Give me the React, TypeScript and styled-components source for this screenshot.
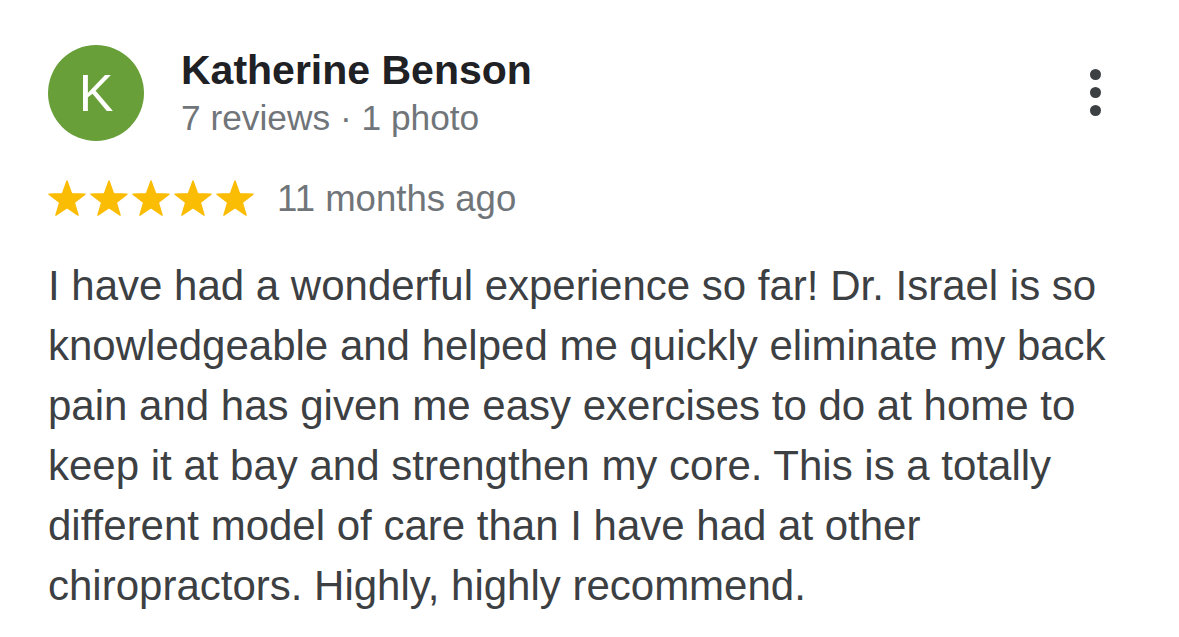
import styled, { createGlobalStyle } from "styled-components";

const GlobalStyle = createGlobalStyle`
	html, body {
		margin: 0;
		padding: 0;
		background: #ffffff;
	}
	body {
		font-family: "Liberation Sans", Arial, sans-serif;
	}
`;

// five point star, outer radius ~19, drawn in a 36x34 box
const Star = () => (
	<StarIcon viewBox="-1 -1 38 36">
		<path
			fill="#fbbc04"
			stroke="#fbbc04"
			strokeWidth="1.4"
			strokeLinejoin="round"
			d="M18 0 L22.6 12.8 L36 13.1 L25.3 21.4 L29.1 34.2 L18 26.6 L6.9 34.2 L10.7 21.4 L0 13.1 L13.4 12.8 Z"
		/>
	</StarIcon>
);

export default function App() {
	return (
		<>
			<GlobalStyle />
			<Card>
				<Header>
					<Avatar>K</Avatar>
					<Author>
						<Name>Katherine Benson</Name>
						<Meta>7 reviews · 1 photo</Meta>
					</Author>
					<MoreButton aria-label="More">
						<Dot />
						<Dot />
						<Dot />
					</MoreButton>
				</Header>
				<RatingRow>
					<Stars>
						{[0, 1, 2, 3, 4].map((i) => (
							<Star key={i} />
						))}
					</Stars>
					<Time>11 months ago</Time>
				</RatingRow>
				<Body>
					I have had a wonderful experience so far! Dr. Israel is so
					knowledgeable and helped me quickly eliminate my back pain and has
					given me easy exercises to do at home to keep it at bay and
					strengthen my core. This is a totally different model of care than I
					have had at other chiropractors. Highly, highly recommend.
				</Body>
			</Card>
		</>
	);
}

const Card = styled.div`
	width: 1179px;
	height: 637px;
	box-sizing: border-box;
	padding: 45px 41px 0 48px;
	background: #ffffff;
	overflow: hidden;
`;

const Header = styled.div`
	display: flex;
	align-items: flex-start;
`;

const Avatar = styled.div`
	width: 96px;
	height: 96px;
	border-radius: 50%;
	background: #689f38;
	color: #ffffff;
	font-size: 52px;
	line-height: 1;
	display: flex;
	align-items: center;
	justify-content: center;
	flex-shrink: 0;
`;

const Author = styled.div`
	margin-left: 37px;
	padding-top: 1px;
	flex: 1;
`;

const Name = styled.div`
	font-size: 41px;
	font-weight: 700;
	color: #202124;
	line-height: 48px;
`;

const Meta = styled.div`
	font-size: 35.3px;
	color: #70757a;
	line-height: 44px;
	margin-top: 2px;
`;

const MoreButton = styled.div`
	display: flex;
	flex-direction: column;
	gap: 7px;
	margin-top: 24px;
	margin-right: 37px;
`;

const Dot = styled.span`
	width: 11px;
	height: 11px;
	border-radius: 50%;
	background: #3c4043;
`;

const RatingRow = styled.div`
	display: flex;
	align-items: flex-start;
	margin-top: 38px;
`;

const Stars = styled.div`
	display: flex;
	gap: 4px;
	padding-top: 1px;
`;

const StarIcon = styled.svg`
	width: 38px;
	height: 36px;
	display: block;
`;

const Time = styled.span`
	font-size: 36.6px;
	line-height: 40px;
	color: #70757a;
	margin-left: 23px;
`;

const Body = styled.p`
	margin: 37px 0 0;
	font-size: 42px;
	line-height: 60px;
	color: #3c4043;
`;
